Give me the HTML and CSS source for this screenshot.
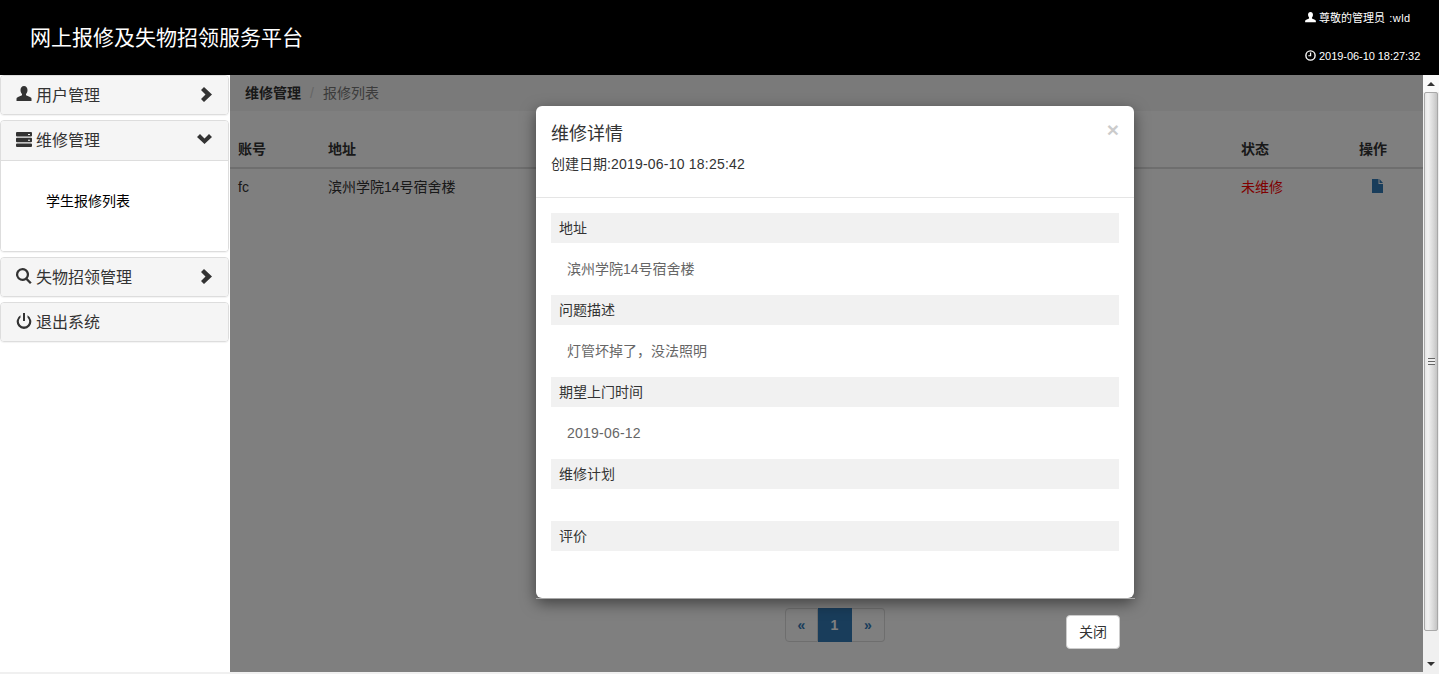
FILE: index.html
```html
<!DOCTYPE html>
<html>
<head>
  <title>网上报修及失物招领服务平台</title>
  <meta charset="utf-8">
  <link rel="stylesheet" href="styles.css">
</head>
<body>
  <div class="top">
    <div class="top-title">网上报修及失物招领服务平台</div>
    <div class="top-info">
      <div class="top-user">
        <svg class="ico-sm" viewBox="0 0 16 16"><path d="M8 0c2.300 0 3.600 1.700 3.600 4 0 1.600-.6 3-1.500 3.900v1.400l4.100 1.800c1 .5 1.600 1 1.600 2V15H.2v-1.900c0-1 .6-1.500 1.600-2l4.100-1.800V7.900C5 7 4.400 5.600 4.400 4 4.400 1.700 5.700 0 8 0z"/></svg>
        尊敬的管理员 <span class="top-name">:wld</span>
      </div>
      <div class="top-time">
        <svg class="ico-sm" viewBox="0 0 16 16"><circle cx="8" cy="8" r="6.700" fill="none" stroke="currentColor" stroke-width="2"/><path d="M7.200 3.500h1.800v5.700H4.800V7.500h2.400z"/></svg>
        2019-06-10 18:27:32
      </div>
    </div>
  </div>
  <div class="main">
    <div class="side">
      <div class="side-panel">
        <div class="side-head">
          <svg class="ico" viewBox="0 0 16 16"><path d="M8 0c2.200 0 3.500 1.700 3.500 4 0 1.600-.6 3-1.500 3.900v1.400l4 1.800c1 .5 1.500 1 1.500 2V15H.500v-1.900c0-1 .5-1.500 1.500-2l4-1.800V7.900C5.100 7 4.500 5.600 4.500 4 4.500 1.700 5.800 0 8 0z"/></svg>
          <span class="side-label">用户管理</span>
          <svg class="arrow" viewBox="0 0 11 15"><path d="M3 0l8 7.500L3 15l-3-3 4.500-4.500L0 3z"/></svg>
        </div>
      </div>
      <div class="side-panel">
        <div class="side-head side-head-open">
          <svg class="ico" viewBox="0 0 16 16"><path fill-rule="evenodd" d="M1 1h14a1 1 0 0 1 1 1v2.500a1 1 0 0 1-1 1H1a1 1 0 0 1-1-1V2a1 1 0 0 1 1-1zm11 2v1h2V3zM1 6.700h14a1 1 0 0 1 1 1v2.600a1 1 0 0 1-1 1H1a1 1 0 0 1-1-1V7.700a1 1 0 0 1 1-1zm11 2v1h2v-1zM1 12.500h14a1 1 0 0 1 1 1V15a1 1 0 0 1-1 1H1a1 1 0 0 1-1-1v-1.500a1 1 0 0 1 1-1z"/></svg>
          <span class="side-label">维修管理</span>
          <svg class="arrow-down" viewBox="0 0 15 10"><path d="M0 3l3-3 4.500 4.500L12 0l3 3-7.500 7z"/></svg>
        </div>
        <div class="side-body">
          <div class="side-link">学生报修列表</div>
        </div>
      </div>
      <div class="side-panel">
        <div class="side-head">
          <svg class="ico" viewBox="0 0 16 16"><path fill-rule="evenodd" d="M6.500 0a6.500 6.500 0 0 1 5.200 10.400l4 4-1.700 1.600-4-4A6.500 6.500 0 1 1 6.500 0zm0 2.200a4.300 4.300 0 1 0 0 8.600 4.300 4.300 0 0 0 0-8.600z"/></svg>
          <span class="side-label">失物招领管理</span>
          <svg class="arrow" viewBox="0 0 11 15"><path d="M3 0l8 7.500L3 15l-3-3 4.500-4.500L0 3z"/></svg>
        </div>
      </div>
      <div class="side-panel">
        <div class="side-head">
          <svg class="ico" viewBox="0 0 16 16"><path d="M7 0h2v8H7z"/><path d="M4.500 2.200v2.300a5.200 5.200 0 1 0 7 0V2.200a7.300 7.300 0 1 1-7 0z"/></svg>
          <span class="side-label">退出系统</span>
        </div>
      </div>
    </div>
    <div class="content">
      <div class="crumb"><b>维修管理</b><span class="crumb-sep">/</span><span class="crumb-now">报修列表</span></div>
      <table class="list">
        <tr>
          <th class="c-acc">账号</th>
          <th class="c-addr">地址</th>
          <th class="c-fill"></th>
          <th class="c-state">状态</th>
          <th class="c-op">操作</th>
        </tr>
        <tr>
          <td>fc</td>
          <td>滨州学院14号宿舍楼</td>
          <td></td>
          <td class="red">未维修</td>
          <td class="doc">
            <svg viewBox="0 0 11 14"><path d="M0 0h6.500v5H11v9H0z"/><path d="M7.500 0L11 4H7.500z"/></svg>
          </td>
        </tr>
      </table>
      <div class="pager">
        <span class="pg pg-first">«</span><span class="pg pg-on">1</span><span class="pg pg-last">»</span>
      </div>
      <div class="mask"></div>
      <div class="modal">
        <div class="modal-head">
          <span class="modal-x">×</span>
          <div class="modal-title">维修详情</div>
          <div class="modal-date">创建日期:<span class="num">2019-06-10 18:25:42</span></div>
        </div>
        <div class="modal-body">
          <div class="field-name">地址</div>
          <div class="field-val">滨州学院14号宿舍楼</div>
          <div class="field-name">问题描述</div>
          <div class="field-val">灯管坏掉了，没法照明</div>
          <div class="field-name">期望上门时间</div>
          <div class="field-val"><span class="num">2019-06-12</span></div>
          <div class="field-name">维修计划</div>
          <div class="field-val"></div>
          <div class="field-name">评价</div>
          <div class="field-val"></div>
        </div>
        <button class="modal-close">关闭</button>
      </div>
    </div>
    <div class="scroll">
      <div class="scroll-btn"><i class="tri-up"></i></div>
      <div class="scroll-thumb"><span class="grip"></span></div>
      <div class="scroll-btn"><i class="tri-down"></i></div>
    </div>
  </div>
  <div class="strip"></div>
</body>
</html>
```

FILE: styles.css
```css
* {
  box-sizing: border-box;
}
html, body {
  height: 100%;
  margin: 0;
  overflow: hidden;
}
body {
  font-family: "Liberation Sans", "Noto Sans CJK SC", sans-serif;
  font-size: 14px;
  line-height: 20px;
  color: #333;
  background: #fff;
  display: flex;
  flex-direction: column;
}
svg {
  fill: currentColor;
}
.num {
  letter-spacing: .22px;
}
.top {
  height: 75px;
  flex: none;
  background: #000;
  color: #fff;
  display: flex;
  justify-content: space-between;
}
.top-title {
  font-size: 21px;
  line-height: 28px;
  padding: 24px 0 0 30px;
}
.top-info {
  width: 134px;
  font-size: 11px;
  line-height: 14px;
  padding-top: 11px;
}
.top-time {
  margin-top: 24px;
  letter-spacing: -.05px;
}
.top-name {
  letter-spacing: .5px;
  margin-left: 1px;
}
.ico-sm {
  width: 11px;
  height: 11px;
  vertical-align: -1px;
}
.main {
  flex: 1;
  display: flex;
  min-height: 0;
}
.side {
  width: 230px;
  flex: none;
}
.side-panel {
  width: 229px;
  margin-bottom: 5px;
  border: 1px solid #ddd;
  border-radius: 4px;
  box-shadow: 0 1px 1px rgba(0,0,0,.05);
  overflow: hidden;
}
.side-head {
  height: 38px;
  display: flex;
  align-items: center;
  padding: 0 15px;
  background: #f5f5f5;
  font-size: 16px;
  color: #333;
}
.side-head-open {
  height: 39px;
  padding-bottom: 1px;
}
.ico {
  width: 16px;
  height: 16px;
  margin-right: 4px;
  margin-top: -3px;
}
.side-label {
  flex: 1;
  padding-top: 2px;
}
.arrow {
  width: 11px;
  height: 15px;
  margin: -1px 1px 0 0;
}
.arrow-down {
  width: 15px;
  height: 10px;
  margin: -2px 1px 0 0;
}
.side-body {
  height: 91px;
  border-top: 1px solid #ddd;
  background: #fff;
  padding: 30px 0 0 45px;
  font-size: 14px;
  color: #000;
}
.content {
  flex: 1;
  position: relative;
  min-width: 0;
}
.crumb {
  height: 36px;
  background: #f5f5f5;
  padding: 8px 15px;
  font-size: 14px;
}
.crumb b {
  color: #333;
}
.crumb-sep {
  color: #ccc;
  padding: 0 9px;
}
.crumb-now {
  color: #777;
}
.list {
  width: 100%;
  margin-top: 20px;
  border-collapse: collapse;
  table-layout: fixed;
}
.list th, .list td {
  text-align: left;
  padding: 8px;
  line-height: 20px;
}
.list th {
  border-bottom: 2px solid #ddd;
}
.c-acc { width: 90px; }
.c-addr { width: 200px; }
.c-state { width: 118px; }
.c-op { width: 72px; }
.red {
  color: #f00;
}
.list .doc {
  color: #337ab7;
  vertical-align: top;
  padding-top: 10px;
}
.doc svg {
  width: 11px;
  height: 14px;
  margin-left: 13px;
  display: block;
}
.pager {
  display: flex;
  width: 100px;
  height: 34px;
  margin: 403px 0 0 555px;
}
.pg {
  width: 33px;
  border: 1px solid #ddd;
  border-left: 0;
  color: #337ab7;
  font-weight: bold;
  text-align: center;
  line-height: 32px;
}
.pg-first {
  border-left: 1px solid #ddd;
  border-radius: 4px 0 0 4px;
}
.pg-last {
  border-radius: 0 4px 4px 0;
}
.pg-on {
  width: 34px;
  background: #337ab7;
  border-color: #337ab7;
  color: #fff;
}
.mask {
  position: absolute;
  inset: 0;
  background: rgba(0,0,0,.5);
}
.modal {
  position: absolute;
  left: 306px;
  top: 31px;
  width: 598px;
  height: 492px;
  background: #fff;
  border-radius: 6px;
  box-shadow: 0 5px 15px rgba(0,0,0,.5);
}
.modal::after {
  content: "";
  position: absolute;
  left: 0;
  right: -1px;
  bottom: -1px;
  height: 1px;
  background: #a8a8a8;
}
.modal-head {
  height: 92px;
  padding: 15px 15px 0;
  border-bottom: 1px solid #e5e5e5;
  position: relative;
}
.modal-x {
  position: absolute;
  right: 15px;
  top: 13px;
  font-size: 21px;
  font-weight: bold;
  color: #000;
  opacity: .2;
  line-height: 21px;
}
.modal-title {
  font-size: 18px;
  line-height: 26px;
}
.modal-date {
  margin-top: 7px;
}
.modal-body {
  padding: 15px;
}
.field-name {
  height: 30px;
  line-height: 30px;
  padding-left: 8px;
  background: #f1f1f1;
}
.field-val {
  height: 52px;
  line-height: 52px;
  padding-left: 16px;
  color: #666;
}
.field-val:empty {
  height: 32px;
}
.modal-close {
  position: absolute;
  left: 530px;
  top: 509px;
  width: 54px;
  height: 34px;
  border: 1px solid #ccc;
  border-radius: 4px;
  background: #fff;
  color: #333;
  font: inherit;
}
.scroll {
  width: 16px;
  flex: none;
  display: flex;
  flex-direction: column;
  background: #f0f0f0;
}
.scroll-btn {
  height: 17px;
  display: flex;
  align-items: center;
  justify-content: center;
}
.scroll-btn:first-child {
  background: #fafafa;
}
.tri-up {
  border: 4px solid transparent;
  border-top: 0;
  border-bottom: 4px solid #333;
}
.tri-down {
  border: 4px solid transparent;
  border-bottom: 0;
  border-top: 4px solid #333;
}
.scroll-thumb {
  flex: 1;
  margin: 0 1px 24px;
  background: linear-gradient(90deg, #e6e6e6, #f2f2f2 25%, #d8d8d8 70%, #c4c4c4);
  border: 1px solid #a8a8a8;
  border-radius: 2px;
  display: flex;
  align-items: center;
  justify-content: center;
}
.grip {
  width: 7px;
  height: 7px;
  background: repeating-linear-gradient(180deg, #666 0 1px, #eee 1px 3px);
}
.strip {
  height: 2px;
  flex: none;
  background: #f0f0f0;
}
```
